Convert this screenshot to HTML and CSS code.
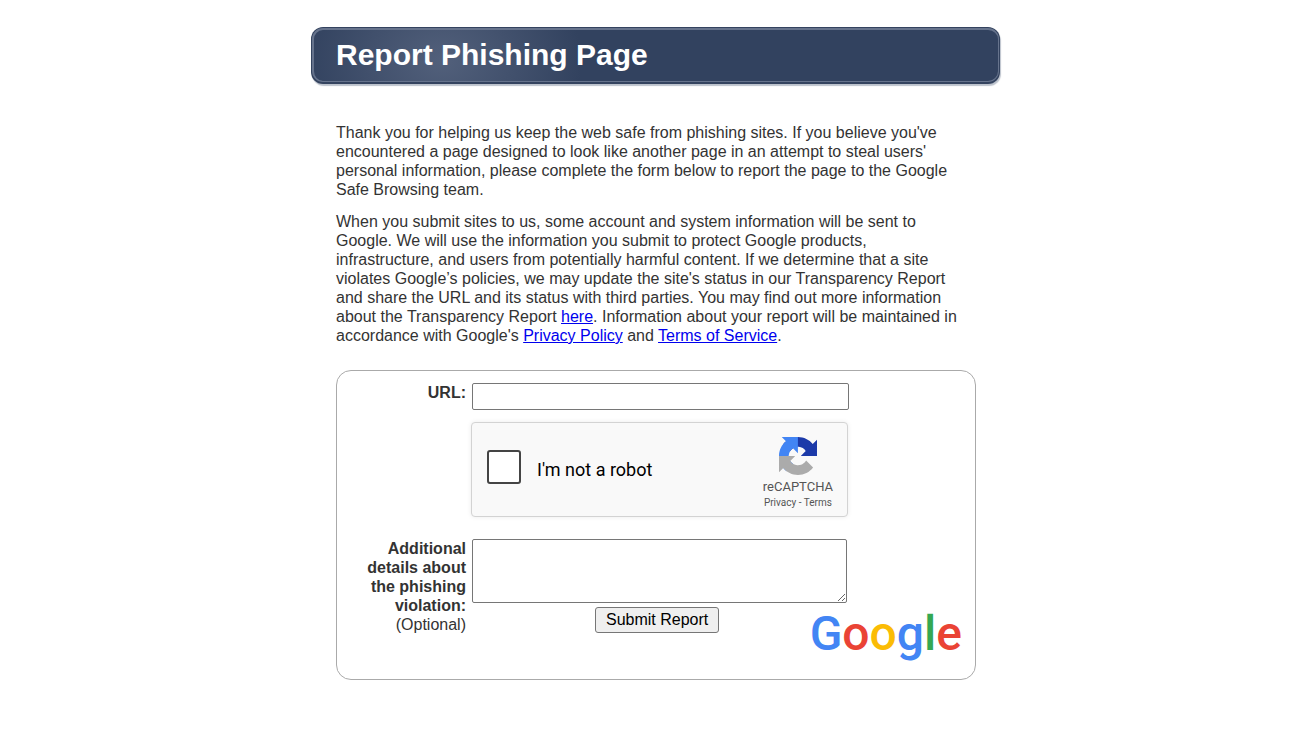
FILE: index.html
```html
<!DOCTYPE html>
<html lang="en">
<head>
  <meta charset="utf-8" />
  <meta name="viewport" content="width=device-width, initial-scale=1" />
  <title>Report Phishing Page</title>
  <link rel="stylesheet" href="styles.css">
</head>
<body>
  <main class="page">
    <header class="banner">
      <h1>Report Phishing Page</h1>
    </header>

    <div class="content">
      <p>Thank you for helping us keep the web safe from phishing sites. If you believe you've encountered a page designed to look like another page in an attempt to steal users' personal information, please complete the form below to report the page to the Google Safe Browsing team.</p>
      <p>When you submit sites to us, some account and system information will be sent to Google. We will use the information you submit to protect Google products, infrastructure, and users from potentially harmful content. If we determine that a site violates Google’s policies, we may update the site's status in our Transparency Report and share the URL and its status with third parties. You may find out more information about the Transparency Report <a href="#report">here</a>. Information about your report will be maintained in accordance with Google's <a href="#privacy">Privacy Policy</a> and <a href="#terms">Terms of Service</a>.</p>

      <form class="report-form">
        <label class="label" for="url">URL:</label>
        <input class="url-input" type="text" id="url" name="url">

        <div class="captcha">
          <input class="captcha-box" type="checkbox" id="robot" name="robot">
          <label class="captcha-label" for="robot">I'm not a robot</label>
          <div class="captcha-brand">
            <svg class="captcha-logo" viewBox="0 0 64 64" aria-hidden="true">
              <path fill="#1c3aa9" d="M64 31.955l-.037-1.374V4.687l-7.16 7.16C50.948 4.674 42.033.093 32.05.093c-10.4 0-19.622 4.96-25.458 12.64l11.736 11.86a15.55 15.55 0 0 1 4.754-5.334c2.05-1.6 4.952-2.906 8.968-2.906.485 0 .86.057 1.135.163 4.976.393 9.288 3.14 11.828 7.124l-8.307 8.307L64 31.953"/>
              <path fill="#4285f4" d="M31.862.094l-1.374.037H4.594l7.16 7.16C4.58 13.147 0 22.06 0 32.046c0 10.4 4.96 19.622 12.64 25.458L24.5 45.768a15.55 15.55 0 0 1-5.334-4.754c-1.6-2.05-2.906-4.952-2.906-8.968 0-.485.057-.86.163-1.135.393-4.976 3.14-9.288 7.124-11.828l8.307 8.307L31.86.095"/>
              <path fill="#ababab" d="M.001 32.045l.037 1.374v25.894l7.16-7.16c5.856 7.173 14.77 11.754 24.754 11.754 10.4 0 19.622-4.96 25.458-12.64l-11.736-11.86a15.55 15.55 0 0 1-4.754 5.334c-2.05 1.6-4.952 2.906-8.968 2.906-.485 0-.86-.057-1.135-.163-4.976-.393-9.288-3.14-11.828-7.124l8.307-8.307c-10.522.04-22.4.066-27.295-.005"/>
            </svg>
            <span class="captcha-name">reCAPTCHA</span>
            <span class="captcha-links"><a href="#captcha-privacy">Privacy</a> - <a href="#captcha-terms">Terms</a></span>
          </div>
        </div>

        <label class="label" for="details">Additional details about the phishing violation: <span class="optional">(Optional)</span></label>
        <div class="details">
          <textarea class="details-input" id="details" name="details"></textarea>
          <div class="actions">
            <button class="submit" type="submit">Submit Report</button>
            <div class="google"><span class="g-blue">G</span><span class="g-red">o</span><span class="g-yellow">o</span><span class="g-blue">g</span><span class="g-green">l</span><span class="g-red">e</span></div>
          </div>
        </div>
      </form>
    </div>
  </main>
</body>
</html>
```
FILE: styles.css
```css
*, *::before, *::after {
  box-sizing: border-box;
}

body {
  margin: 0;
  background: #fff;
  color: #333;
  font: 16px/19px "Liberation Sans", Arial, sans-serif;
}

a {
  color: #0000ee;
}

.page {
  max-width: 692px;
  margin: 0 auto;
  padding: 27px 0;
}

/* Title bar */
.banner {
  margin-right: 3px;
  padding: 1px 1px 2px;
  border-radius: 12px;
  background: #34435f;
  box-shadow: 1px 2px 1px #bcc2cc;
}

.banner h1 {
  margin: 0;
  padding: 7px 22px 8px;
  border: 1px solid #66738c;
  border-width: 2px 1px 1px 2px;
  border-radius: 11px;
  background: radial-gradient(ellipse 140px 110px at 128px 60%, #52607b, #32425f) #32425f;
  color: #fff;
  font-size: 30px;
  line-height: 36px;
}

.content {
  padding: 39px 27px 0 25px;
}

.content p {
  margin: 0 0 13px;
  padding-right: 9px;
}

/* Report form */
.report-form {
  display: grid;
  grid-template-columns: 129px minmax(0, 1fr);
  column-gap: 6px;
  margin-top: 25px;
  padding: 12px 13px 18px 0;
  border: 1px solid #aaa;
  border-radius: 15px;
}

.label {
  padding-left: 20px;
  font-weight: bold;
  text-align: right;
}

.optional {
  display: block;
  font-weight: normal;
}

.url-input {
  width: 100%;
  max-width: 377px;
  height: 27px;
  padding: 1px 2px;
  border: 1px solid #767676;
  border-radius: 2px;
  font: inherit;
}

/* Captcha widget */
.captcha {
  grid-column: 2;
  display: flex;
  align-items: center;
  max-width: 377px;
  height: 95px;
  margin: 12px 0 22px -1px;
  padding: 0 14px 0 15px;
  border: 1px solid #d3d3d3;
  border-radius: 4px;
  background: #f9f9f9;
  box-shadow: 0 0 5px rgba(0, 0, 0, .08);
  font-family: Roboto, sans-serif;
}

.captcha-box {
  appearance: none;
  width: 34px;
  height: 34px;
  margin: 0 16px 6px 0;
  border: 2px solid #444;
  border-radius: 3px;
  background: #fff;
}

.captcha-label {
  color: #000;
  font-size: 18px;
}

.captcha-brand {
  display: flex;
  flex-direction: column;
  align-items: center;
  margin-left: auto;
  padding-top: 9px;
  color: #555;
}

.captcha-logo {
  width: 38px;
  height: 38px;
}

.captcha-name {
  margin-top: 4px;
  font-size: 13px;
  line-height: 16px;
}

.captcha-links {
  font-size: 10px;
  line-height: 16px;
}

.captcha-links a {
  color: inherit;
  text-decoration: none;
}

.details-input {
  display: block;
  width: 100%;
  max-width: 375px;
  height: 64px;
  padding: 2px;
  border: 1px solid #767676;
  border-radius: 2px;
  font: inherit;
}

.actions {
  display: flex;
  justify-content: space-between;
  align-items: flex-start;
  padding: 4px 0 0 123px;
}

.submit {
  height: 26px;
  padding: 0 10px 2px;
  border: 1px solid #767676;
  border-radius: 3px;
  background: #efefef;
  color: #000;
  font: inherit;
}

.google {
  font: 500 48px/54px Roboto, sans-serif;
}

.g-blue { color: #4285f4; }
.g-red { color: #ea4335; }
.g-yellow { color: #fbbc05; }
.g-green { color: #34a853; }
```
